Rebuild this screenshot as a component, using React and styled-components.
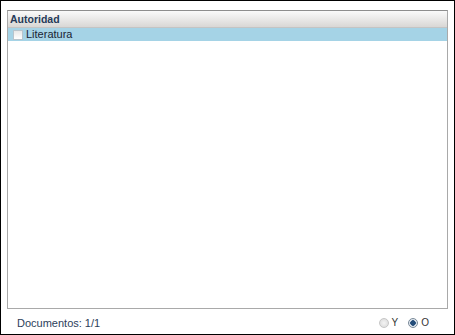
import React from 'react'
import styled, { createGlobalStyle } from 'styled-components'

const GlobalStyle = createGlobalStyle`
	body {
		margin: 0;
		font-family: "Liberation Sans", Arial, sans-serif;
	}
`

const Frame = styled.div`
	box-sizing: border-box;
	width: 455px;
	height: 335px;
	border: 1px solid #000;
	background: #fff;
	display: flex;
	flex-direction: column;
	padding: 9px 6px 0 6px;
`

const Panel = styled.section`
	flex: 0 0 299px;
	box-sizing: border-box;
	border: 1px solid #a9a9a9;
	border-top-color: #8e8e8e;
	display: flex;
	flex-direction: column;
`

const PanelHeader = styled.header`
	height: 16px;
	background: linear-gradient(#fafafa, #d9d7d5);
	border-bottom: 1px solid #c4c4c4;
	color: #263a58;
	font-size: 10.5px;
	font-weight: bold;
	line-height: 16px;
	padding-left: 2px;
`

const Row = styled.div`
	height: 13px;
	display: flex;
	align-items: center;
	gap: 3px;
	padding-left: 5px;
	background: ${p => (p.selected ? '#a5d3e6' : 'transparent')};
	color: #1a2433;
	font-size: 11px;
	line-height: 13px;
`

const Check = styled.span`
	box-sizing: border-box;
	width: 10px;
	height: 10px;
	border: 1px solid #b8c4cc;
	background: linear-gradient(#e8e8e8, #ffffff);
`

const Footer = styled.footer`
	flex: 1;
	display: flex;
	align-items: center;
	justify-content: space-between;
	padding: 2px 19px 0 10px;
	font-size: 11px;
	color: #2c3e5a;
`

const Options = styled.div`
	display: flex;
	gap: 10px;
	align-items: center;
`

const Option = styled.label`
	display: flex;
	align-items: center;
	gap: 3px;
	font-size: 10px;
	color: #333;
`

const Radio = styled.span`
	box-sizing: border-box;
	width: 10px;
	height: 10px;
	border-radius: 50%;
	border: 1px solid ${p => (p.checked ? '#7a8a99' : '#c6c6c6')};
	background: ${p =>
		p.checked
			? 'radial-gradient(circle, #244d7a 0 2.5px, #dfe6ee 3px)'
			: 'radial-gradient(circle, #f4f4f4, #d8d8d8)'};
`

export default function App() {
	return (
		<Frame>
			<GlobalStyle />
			<Panel>
				<PanelHeader>Autoridad</PanelHeader>
				<Row selected>
					<Check />
					Literatura
				</Row>
			</Panel>
			<Footer>
				<span>Documentos: 1/1</span>
				<Options>
					<Option><Radio />Y</Option>
					<Option><Radio checked />O</Option>
				</Options>
			</Footer>
		</Frame>
	)
}
